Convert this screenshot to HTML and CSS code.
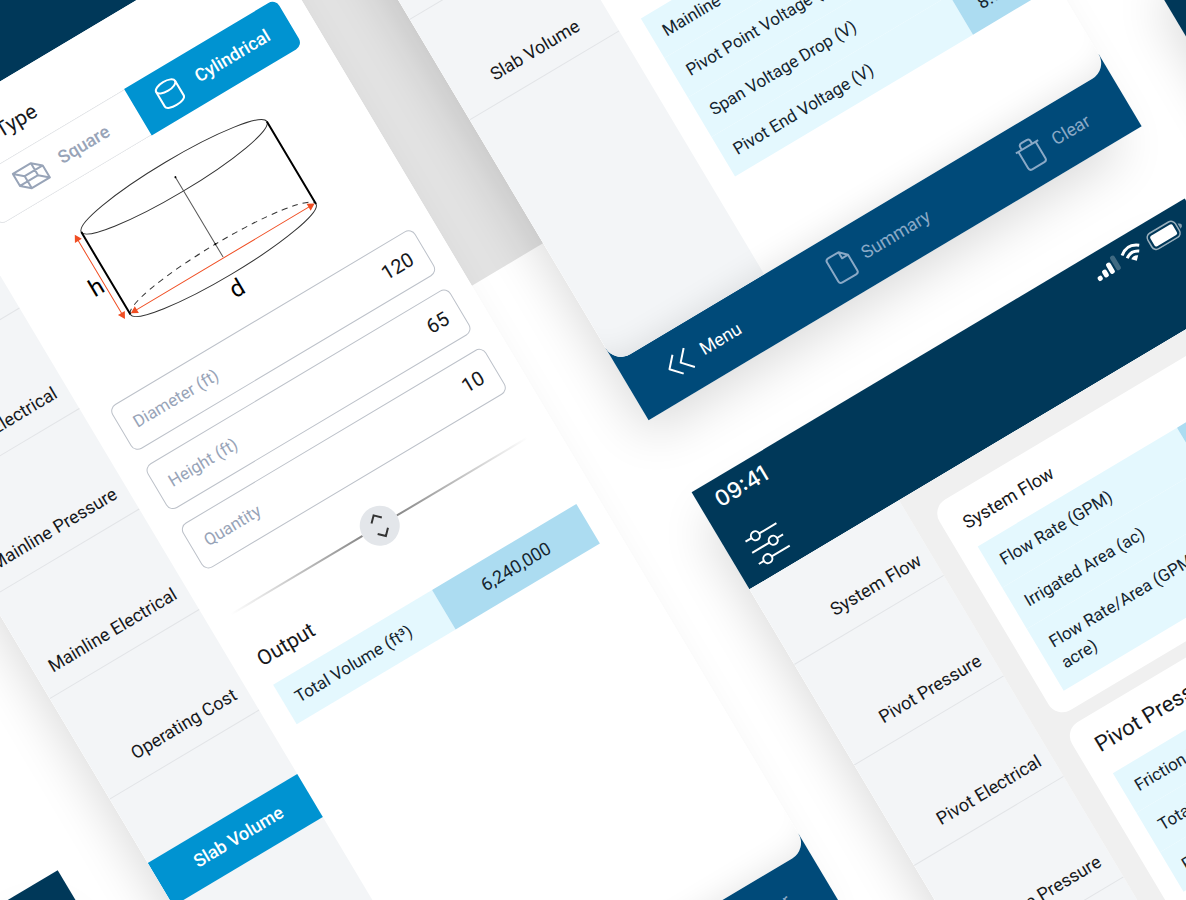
FILE: index.html
```html
<!DOCTYPE html>
<html lang="en">
    <head>
        <meta charset="utf-8">
        <title>Irrigation Calculator</title>
        <meta name="viewport" content="width=device-width, initial-scale=1.0">
        <link rel="stylesheet" href="styles.css">
    </head>
    <body>
        <div class="stage">
            <div class="board">
                <div class="backdrop"></div>

                <!-- Output screen -->
                <section class="phone phone-output">
                    <header class="topbar"></header>
                    <div class="screen">
                        <nav class="sidebar">
                            <ul>
                                <li><a href="#">System Flow</a></li>
                                <li><a href="#">Pivot Pressure</a></li>
                                <li><a href="#">Pivot Electrical</a></li>
                                <li><a href="#">Mainline Pressure</a></li>
                                <li><a href="#">Mainline Electrical</a></li>
                                <li><a href="#">Operating Cost</a></li>
                                <li class="inset"><a href="#">Slab Volume</a></li>
                            </ul>
                        </nav>
                        <main class="content content-end">
                            <table class="results">
                                <tr><th scope="row">Mainline Voltage Drop (V)</th><td>6.20</td></tr>
                                <tr><th scope="row">Pivot Point Voltage (V)</th><td>472</td></tr>
                                <tr><th scope="row">Span Voltage Drop (V)</th><td>12.4</td></tr>
                                <tr><th scope="row">Pivot End Voltage (V)</th><td>8.00</td></tr>
                            </table>
                        </main>
                    </div>
                    <footer class="toolbar">
                        <button type="button" class="active">
                            <svg width="28" height="24" viewBox="0 0 28 24"><path d="M12 1 2 12l10 11M25 1 15 12l10 11"/></svg>
                            Menu
                        </button>
                        <button type="button">
                            <svg width="26" height="32" viewBox="0 0 26 32"><path d="M17 2H5a3 3 0 0 0-3 3v22a3 3 0 0 0 3 3h16a3 3 0 0 0 3-3V9zM17 2v7h7"/></svg>
                            Summary
                        </button>
                        <button type="button">
                            <svg width="28" height="32" viewBox="0 0 28 32"><path d="M1 8h26M4 8v19a3 3 0 0 0 3 3h14a3 3 0 0 0 3-3V8M8 8V5a3 3 0 0 1 3-3h6a3 3 0 0 1 3 3v3"/></svg>
                            Clear
                        </button>
                    </footer>
                </section>

                <!-- System flow screen -->
                <section class="phone phone-flow">
                    <header class="topbar">
                        <div class="status">
                            <span class="clock">09:41</span>
                            <svg width="102" height="22" viewBox="0 0 102 22">
                                <g fill="#fff">
                                    <rect x="1" y="14" width="5" height="5" rx="2"/>
                                    <rect x="8" y="11" width="5" height="8" rx="2"/>
                                    <rect x="15" y="7" width="5" height="12" rx="2"/>
                                    <rect x="22" y="3" width="5" height="16" rx="2" opacity=".25"/>
                                    <path d="M44 20l4-4q-4-3-8 0z"/>
                                    <rect x="67" y="6" width="26" height="12" rx="2"/>
                                    <path d="M98 9v6q3-1 3-3t-3-3z" opacity=".5"/>
                                </g>
                                <g fill="none" stroke="#fff">
                                    <path stroke-width="3" d="M34 8q10-8 20 0M37 13q7-5 14 0"/>
                                    <rect x="64" y="3" width="32" height="18" rx="5" stroke-width="1.500" opacity=".6"/>
                                </g>
                            </svg>
                        </div>
                        <button type="button" class="filters" aria-label="Filters">
                            <svg width="38" height="38" viewBox="0 0 38 38">
                                <path d="M1 6h7M17 6h20M1 19h20M30 19h7M1 32h6M16 32h21"/>
                                <circle cx="12.500" cy="6" r="4.500"/>
                                <circle cx="25.500" cy="19" r="4.500"/>
                                <circle cx="11.500" cy="32" r="4.500"/>
                            </svg>
                        </button>
                    </header>
                    <div class="screen">
                        <nav class="sidebar">
                            <ul>
                                <li><a href="#">System Flow</a></li>
                                <li><a href="#">Pivot Pressure</a></li>
                                <li><a href="#">Pivot Electrical</a></li>
                                <li><a href="#">Mainline Pressure</a></li>
                                <li><a href="#">Mainline Electrical</a></li>
                            </ul>
                        </nav>
                        <main class="content content-cards">
                            <article class="card">
                                <h3>System Flow</h3>
                                <table class="results roomy">
                                    <tr><th scope="row">Flow Rate (GPM)</th><td>800</td></tr>
                                    <tr><th scope="row">Irrigated Area (ac)</th><td>125</td></tr>
                                    <tr><th scope="row">Flow Rate/Area (GPM/<br>acre)</th><td>6.40</td></tr>
                                </table>
                            </article>
                            <article class="card">
                                <h2>Pivot Pressure</h2>
                                <table class="results">
                                    <tr><th scope="row">Friction Loss (PSI)</th><td>9.50</td></tr>
                                    <tr><th scope="row">Total Pressure (PSI)</th><td>42.0</td></tr>
                                    <tr><th scope="row">Pivot Pressure (PSI)</th><td>38.0</td></tr>
                                </table>
                            </article>
                        </main>
                    </div>
                </section>

                <!-- Neighbouring screens, only their headers reach the view -->
                <section class="phone phone-left"><header class="topbar"></header></section>
                <section class="phone phone-right"><header class="topbar"></header></section>

                <!-- Slab volume screen -->
                <section class="phone phone-slab">
                    <header class="topbar"></header>
                    <div class="screen">
                        <nav class="sidebar">
                            <ul>
                                <li><a href="#">System Flow</a></li>
                                <li><a href="#">Pivot Pressure</a></li>
                                <li><a href="#">Pivot Electrical</a></li>
                                <li><a href="#">Mainline Pressure</a></li>
                                <li><a href="#">Mainline Electrical</a></li>
                                <li><a href="#">Operating Cost</a></li>
                                <li class="current"><a href="#">Slab Volume</a></li>
                            </ul>
                        </nav>
                        <main class="content">
                            <h2>Slab Type</h2>
                            <div class="tabs">
                                <button type="button">
                                    <svg width="34" height="26" viewBox="0 0 34 26"><path d="M2 2h21v14H2zM11 10h21v14H11zM2 2l9 8M23 2l9 8M2 16l9 8M23 16l9 8"/></svg>
                                    Square
                                </button>
                                <button type="button" class="selected">
                                    <svg width="26" height="30" viewBox="0 0 26 30"><ellipse cx="13" cy="7" rx="11" ry="5"/><path d="M2 7v17c0 6 22 6 22 0V7"/></svg>
                                    Cylindrical
                                </button>
                            </div>
                            <svg class="diagram" viewBox="0 0 353 212">
                                <g fill="none" stroke="#333">
                                    <ellipse cx="175" cy="47" rx="108" ry="17"/>
                                    <path d="M67 143a108 17 0 0 0 216 0"/>
                                    <path d="M67 143a108 17 0 0 1 216 0" stroke-dasharray="6 5"/>
                                    <path d="M176 48v93" stroke="#555"/>
                                    <path d="M67 47v96M283 47v96" stroke="#000" stroke-width="2"/>
                                </g>
                                <circle cx="176" cy="48" r="1"/>
                                <circle cx="176" cy="126" r="1"/>
                                <g fill="#f04e23">
                                    <path d="M68 142l7-4v8zM282 142l-7-4v8zM60 46l-4 7h8zM60 144l-4-7h8z"/>
                                    <path d="M74 142h202M60 52v86" stroke="#f04e23"/>
                                </g>
                                <text x="45" y="110">h</text>
                                <text x="165" y="183">d</text>
                            </svg>
                            <form class="fields">
                                <div class="field">
                                    <label for="diameter">Diameter (ft)</label>
                                    <input id="diameter" type="text" value="120">
                                </div>
                                <div class="field">
                                    <label for="height">Height (ft)</label>
                                    <input id="height" type="text" value="65">
                                </div>
                                <div class="field">
                                    <label for="quantity">Quantity</label>
                                    <input id="quantity" type="text" value="10">
                                </div>
                            </form>
                            <div class="splitter">
                                <button type="button" aria-label="Resize">
                                    <svg width="16" height="28" viewBox="0 0 16 28"><path d="M2 8l6-6 6 6M2 20l6 6 6-6"/></svg>
                                </button>
                            </div>
                            <h2>Output</h2>
                            <table class="results wide">
                                <tr><th scope="row">Total Volume (ft³)</th><td>6,240,000</td></tr>
                            </table>
                        </main>
                    </div>
                    <footer class="toolbar">
                        <button type="button" class="active">
                            <svg width="28" height="24" viewBox="0 0 28 24"><path d="M12 1 2 12l10 11M25 1 15 12l10 11"/></svg>
                            Menu
                        </button>
                        <button type="button">
                            <svg width="26" height="32" viewBox="0 0 26 32"><path d="M17 2H5a3 3 0 0 0-3 3v22a3 3 0 0 0 3 3h16a3 3 0 0 0 3-3V9zM17 2v7h7"/></svg>
                            Summary
                        </button>
                        <button type="button">
                            <svg width="28" height="32" viewBox="0 0 28 32"><path d="M1 8h26M4 8v19a3 3 0 0 0 3 3h14a3 3 0 0 0 3-3V8M8 8V5a3 3 0 0 1 3-3h6a3 3 0 0 1 3 3v3"/></svg>
                            Clear
                        </button>
                    </footer>
                </section>
            </div>
        </div>
    </body>
</html>
```
FILE: styles.css
```css
*, *::before, *::after {
    box-sizing: border-box;
}
body, h2, h3, ul {
    margin: 0;
    padding: 0;
}
button, input {
    font: inherit;
    border: 0;
    background: none;
    padding: 0;
}

:root {
    --navy: #003859;
    --toolbar: #004a79;
    --blue: #0093d1;
    --ink: #17191c;
    --muted: #98a4b8;
    --panel: #f3f5f7;
    --line: #e2e4e7;
    --cell: #e4f8fe;
    --cell-value: #acdcf1;
}

body {
    font-family: Roboto, "Liberation Sans", sans-serif;
    font-size: 18px;
    line-height: 24px;
    color: var(--ink);
    background: #fff;
}

/* Tilted board with the phones laid out on it */
.stage {
    position: relative;
    height: 100vh;
    overflow: hidden;
}
.board {
    position: absolute;
    top: 0;
    left: 0;
    transform: rotate(-30.8deg);
    transform-origin: 0 0;
}
.backdrop {
    position: absolute;
    left: 200px;
    top: -600px;
    width: 200px;
    height: 1087px;
    background: #e2e2e2;
}

.phone {
    position: absolute;
    display: flex;
    flex-direction: column;
    width: 574px;
    height: 1252px;
    background: #fff;
    box-shadow: -18px 24px 50px -10px rgba(0, 0, 0, 0.14);
}
.phone-slab { left: -315px; top: -43px; }
.phone-output { left: 342px; top: -559px; }
.phone-flow { left: 342px; top: 777px; }
.phone-left { left: -970px; top: 777px; }
.phone-right { left: 1000px; top: 560px; }

.topbar {
    flex: none;
    height: 113px;
    background: var(--navy);
}
.status {
    display: flex;
    justify-content: space-between;
    align-items: center;
    padding: 8px 15px 0 17px;
}
.clock {
    font-family: Inter, sans-serif;
    font-size: 22px;
    font-weight: 500;
    color: #fff;
}
.filters {
    display: block;
    margin: 32px 0 0 20px;
}
.filters svg {
    display: block;
    fill: none;
    stroke: #fff;
    stroke-width: 2;
}

.screen {
    position: relative;
    z-index: 1;
    display: flex;
    flex: 1;
    min-height: 0;
    overflow: hidden;
    border-radius: 0 0 18px 18px;
    background: #fff;
}
.screen::after {
    content: "";
    position: absolute;
    inset: 0;
    border-radius: inherit;
    box-shadow: inset 0 -30px 30px -26px rgba(0, 0, 0, 0.09);
    pointer-events: none;
}

/* Sidebar */
.sidebar {
    flex: none;
    width: 174px;
    background: var(--panel);
}
.sidebar ul {
    list-style: none;
}
.sidebar li {
    display: flex;
    flex-direction: column;
    justify-content: flex-end;
    height: 117px;
    border-bottom: 1px solid var(--line);
}
.sidebar li:first-child {
    height: 88px;
}
.sidebar a {
    padding: 12px 12px 14px 0;
    text-align: right;
    white-space: nowrap;
    color: inherit;
    text-decoration: none;
}
.sidebar .inset a {
    padding-right: 32px;
}
.sidebar .current {
    height: 124px;
    border-bottom: 0;
}
.sidebar .current a {
    padding-right: 32px;
    background: var(--blue);
    color: #fff;
    font-weight: 500;
}

/* Content */
.content {
    display: flex;
    flex: 1;
    flex-direction: column;
    min-width: 0;
    padding: 28px 22px 0 25px;
}
.content-end {
    justify-content: flex-end;
    padding-bottom: 99px;
}
.content-cards {
    gap: 14px;
    padding: 23px 24px 0;
    background: #f0f0f0;
}
h2 {
    font-size: 21px;
    font-weight: 400;
    line-height: 28px;
}
h3 {
    font-size: 18px;
    font-weight: 400;
    line-height: 28px;
}

.tabs {
    display: flex;
    height: 54px;
    margin-top: 14px;
}
.tabs button {
    display: flex;
    flex: 1;
    align-items: center;
    justify-content: center;
    gap: 16px;
    border: 1px solid var(--line);
    border-right: 0;
    border-radius: 8px 0 0 8px;
    color: var(--muted);
    font-weight: 500;
}
.tabs .selected {
    gap: 18px;
    border: 0;
    border-radius: 0 8px 8px 0;
    background: var(--blue);
    color: #fff;
}
.tabs svg {
    fill: none;
    stroke: currentColor;
    stroke-width: 2;
    stroke-linejoin: round;
}

.diagram {
    display: block;
    width: 100%;
}
.diagram text {
    font-size: 24px;
}

.fields {
    display: grid;
    gap: 17px;
}
.field {
    display: flex;
    align-items: center;
    height: 52px;
    padding: 0 14px;
    border: 1px solid #bcc1c9;
    border-radius: 8px;
}
.field label {
    flex: 1;
    font-size: 17px;
    color: var(--muted);
}
.field input {
    width: 80px;
    font-size: 20px;
    text-align: right;
    color: var(--ink);
}

.splitter {
    display: flex;
    align-items: center;
    margin: 30px 8px 20px 0;
}
.splitter::before, .splitter::after {
    content: "";
    flex: 1;
    height: 2px;
    background: linear-gradient(to right, transparent, #888);
}
.splitter::after {
    background: linear-gradient(to left, transparent, #888);
}
.splitter button {
    display: grid;
    place-items: center;
    width: 40px;
    height: 40px;
    border-radius: 50%;
    background: #e3e6ea;
}
.splitter svg {
    fill: none;
    stroke: #333;
    stroke-width: 2;
}

/* Result tables */
.results {
    width: 100%;
    border-collapse: collapse;
    table-layout: fixed;
    color: #15252f;
}
h2 + .results {
    margin-top: 14px;
}
.results th {
    padding: 11px 13px;
    background: var(--cell);
    font-size: 17px;
    font-weight: 400;
    text-align: left;
}
.results td {
    width: 76px;
    padding: 11px 0;
    background: var(--cell-value);
    text-align: center;
}
.wide td {
    width: 168px;
}
.roomy th, .roomy td {
    padding-top: 12px;
    padding-bottom: 12px;
}

.card {
    padding: 17px 20px 20px;
    border-radius: 16px;
    background: #fff;
}
.card h2 {
    font-size: 22px;
}
.card .results {
    margin-top: 12px;
}
.card td {
    width: 80px;
}
.card h2 + .results {
    margin-top: 17px;
}

/* Bottom toolbar, reaches up behind the rounded corners of the screen */
.toolbar {
    display: flex;
    flex: none;
    align-items: center;
    justify-content: space-between;
    height: 84px;
    margin-top: -18px;
    padding: 18px 42px 0;
    background: var(--toolbar);
}
.toolbar button {
    display: flex;
    align-items: center;
    gap: 11px;
    color: #8aa9c6;
}
.toolbar .active {
    color: #fff;
}
.toolbar svg {
    fill: none;
    stroke: currentColor;
    stroke-width: 2;
    stroke-linejoin: round;
}
```
